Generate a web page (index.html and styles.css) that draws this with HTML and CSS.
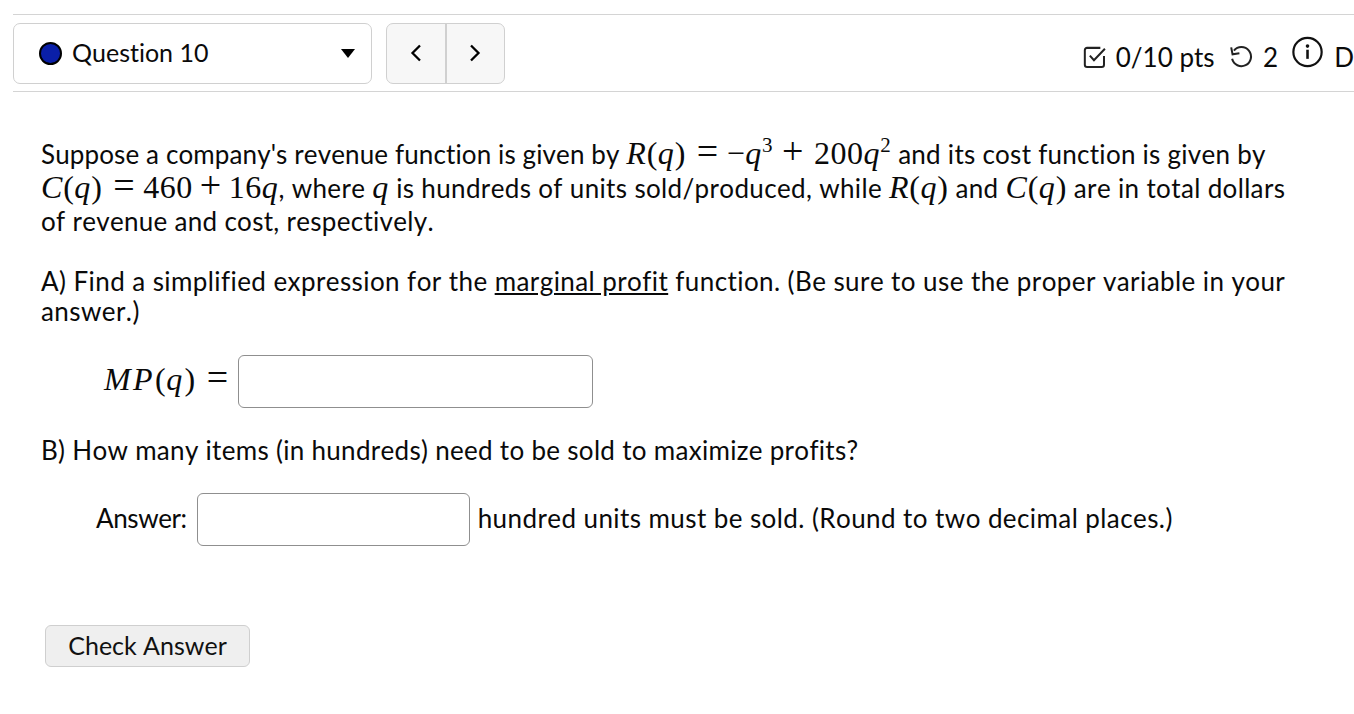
FILE: index.html
```html
<!DOCTYPE html>
<html>
<head>
    <title>Question 10</title>
    <link rel="stylesheet" href="styles.css">
</head>
<body>
    <div class="question-bar">
        <div class="question-select">
            <span class="status-dot"></span>
            <span class="question-name">Question 10</span>
            <span class="caret"></span>
        </div>
        <div class="pager">
            <button class="pager-btn" type="button">
                <svg width="14" height="20" viewBox="0 0 14 20"><path d="M11 2.500 3.500 10l7.500 7.500" fill="none" stroke="#000" stroke-width="2.300"/></svg>
            </button>
            <button class="pager-btn" type="button">
                <svg width="14" height="20" viewBox="0 0 14 20"><path d="M3 2.500 10.500 10 3 17.500" fill="none" stroke="#000" stroke-width="2.300"/></svg>
            </button>
        </div>
        <div class="meta">
            <svg class="icon-check" width="26" height="26" viewBox="0 0 26 26"><path d="M23 12v9.500a2.500 2.500 0 0 1-2.500 2.500h-16a2.500 2.500 0 0 1-2.500-2.500v-16a2.500 2.500 0 0 1 2.500-2.500H19" fill="none" stroke="#222" stroke-width="2.200"/><path d="M7.500 11.500 12 16.500 24 4" fill="none" stroke="#222" stroke-width="2.200"/></svg>
            <span class="pts">0/10 pts</span>
            <svg class="icon-retry" width="28" height="26" viewBox="0 0 28 26"><path d="M6.500 6A10.500 10.500 0 1 1 4.500 15" fill="none" stroke="#222" stroke-width="2.200"/><path d="M3.500 2.500 5 10l7.500-1" fill="none" stroke="#222" stroke-width="2.200"/></svg>
            <span class="tries">2</span>
            <svg class="icon-info" width="34" height="34" viewBox="0 0 34 34"><circle cx="17" cy="17" r="15.500" fill="none" stroke="#111" stroke-width="2.400"/><circle cx="17" cy="10.500" r="2" fill="#111"/><path d="M17 14.500v10" stroke="#111" stroke-width="2.800"/></svg>
            <span class="details">D</span>
        </div>
    </div>

    <div class="question">
        <div class="intro">
            <div class="line first">Suppose a company's revenue function is given by <span class="math"><i>R</i>(<i>q</i>)<span class="op eq">=</span>&minus;<i>q</i><sup>3</sup><span class="op">+</span>200<i>q</i><sup>2</sup></span> <span class="first-tail">and its cost function is given by</span></div>
            <div class="line second"><span class="math"><i>C</i>(<i>q</i>)<span class="op eq">=</span>460<span class="op">+</span>16<i>q</i></span>, where <span class="math"><i>q</i></span> is hundreds of units sold/produced, while <span class="math"><i>R</i>(<i>q</i>)</span> and <span class="math"><i>C</i>(<i>q</i>)</span> are in total dollars</div>
            <div class="line third">of revenue and cost, respectively.</div>
        </div>

        <p class="part-a">A) Find a simplified expression for the <u>marginal profit</u> function. (Be sure to use the proper variable in your answer.)</p>

        <div class="answer-row row-mp">
            <span class="math"><i>MP</i>(<i>q</i>)<span class="op eq">=</span></span>
            <input class="answer-box box-mp" type="text">
        </div>

        <p class="part-b">B) How many items (in hundreds) need to be sold to maximize profits?</p>

        <div class="answer-row row-units">
            <span class="answer-label">Answer:</span>
            <input class="answer-box box-units" type="text">
            <span class="answer-note">hundred units must be sold. (Round to two decimal places.)</span>
        </div>

        <button class="check-btn" type="button">Check Answer</button>
    </div>
</body>
</html>
```

FILE: styles.css
```css
html, body {
    overflow: hidden;
}
body {
    font-family: Lato, "Open Sans", sans-serif;
    font-size: 26px;
    line-height: 30px;
    font-kerning: none;
    font-variant-ligatures: none;
    letter-spacing: 0.3px;
    color: #0a0a0a;
    background-color: #fff;
    margin: 0;
    padding: 14px 0 0 13px;
    height: 700px;
    box-sizing: border-box;
}
.question-bar {
    display: flex;
    align-items: center;
    height: 78px;
    width: 1341px;
    box-sizing: border-box;
    border-top: 1px solid #d4d4d4;
    border-bottom: 1px solid #d4d4d4;
    padding-bottom: 8px;
    padding-top: 8px;
}
.question-select {
    display: flex;
    align-items: center;
    width: 359px;
    height: 61px;
    box-sizing: border-box;
    border: 1px solid #d0d0d0;
    border-radius: 7px;
    padding: 0 16px 0 25px;
}
.status-dot {
    width: 23px;
    height: 23px;
    box-sizing: border-box;
    border-radius: 50%;
    background: #0a1fa8;
    border: 2px solid #000;
    margin-right: 10px;
}
.question-name {
    flex: 1;
    font-size: 25px;
    letter-spacing: 0;
    margin-top: -2px;
}
.caret {
    width: 0;
    height: 0;
    border-left: 7px solid transparent;
    border-right: 7px solid transparent;
    border-top: 9px solid #000;
}
.pager {
    display: flex;
    margin-left: 14px;
    height: 61px;
    width: 119px;
    box-sizing: border-box;
    border: 1px solid #d0d0d0;
    border-radius: 7px;
    background: #f7f7f7;
}
.pager-btn {
    flex: 1;
    display: flex;
    align-items: center;
    justify-content: center;
    background: none;
    border: none;
    padding: 0;
}
.pager-btn + .pager-btn {
    border-left: 2px solid #d0d0d0;
}
.meta {
    display: flex;
    align-items: center;
    margin-left: auto;
    white-space: nowrap;
    width: 271px;
    padding-top: 7px;
    box-sizing: border-box;
    overflow: hidden;
    letter-spacing: 0;
}
.icon-check {
    margin-right: 9px;
}
.pts {
    margin-right: 13px;
}
.icon-retry {
    margin-right: 10px;
}
.tries {
    margin-right: 14px;
}
.icon-info {
    margin-top: -9px;
    margin-right: 11px;
}
.question {
    padding-left: 28px;
}
.intro {
    margin-top: 46px;
}
.line {
    white-space: nowrap;
    height: 34px;
}
.first {
    letter-spacing: 0.12px;
}
.first-tail {
    letter-spacing: 0.27px;
}
.second {
    letter-spacing: 0.35px;
}
.math {
    font-family: "Liberation Serif", serif;
    font-size: 32px;
    letter-spacing: 0.5px;
}
.math i {
    letter-spacing: 0.8px;
}
.math sup {
    font-size: 21px;
    line-height: 0;
}
.op {
    font-size: 38px;
    line-height: 0;
    margin: 0 7px;
}
.first .op {
    margin: 0 10px 0 9px;
}
.first .eq, .eq {
    margin: 0 8px 0 11px;
}
.part-a {
    margin: 26px 0 0;
    width: 1270px;
    letter-spacing: 0.42px;
}
.answer-row {
    display: flex;
    align-items: center;
    white-space: nowrap;
}
.row-mp {
    margin: 29px 0 0 63px;
}
.row-mp .math {
    width: 134px;
    margin-top: -5px;
}
.row-mp .math i {
    letter-spacing: 2.4px;
}
.answer-box {
    height: 53px;
    box-sizing: border-box;
    border: 1px solid #8f8f8f;
    border-radius: 6px;
    background: #fff;
}
.box-mp {
    width: 355px;
}
.part-b {
    margin: 27px 0 0;
}
.row-units {
    margin: 28px 0 0 55px;
}
.answer-label {
    letter-spacing: -0.4px;
    margin-right: 1px;
    margin-top: -3px;
}
.answer-note {
    letter-spacing: 0.42px;
    margin-top: -4px;
}
.box-units {
    width: 273px;
    margin: 0 8px 0 9px;
}
.check-btn {
    display: block;
    margin: 79px 0 0 4px;
    width: 205px;
    height: 42px;
    box-sizing: border-box;
    font: inherit;
    font-size: 25px;
    letter-spacing: 0;
    color: #111;
    background: #efefef;
    border: 1px solid #cfcfcf;
    border-radius: 6px;
    padding: 0 0 2px;
}
```
